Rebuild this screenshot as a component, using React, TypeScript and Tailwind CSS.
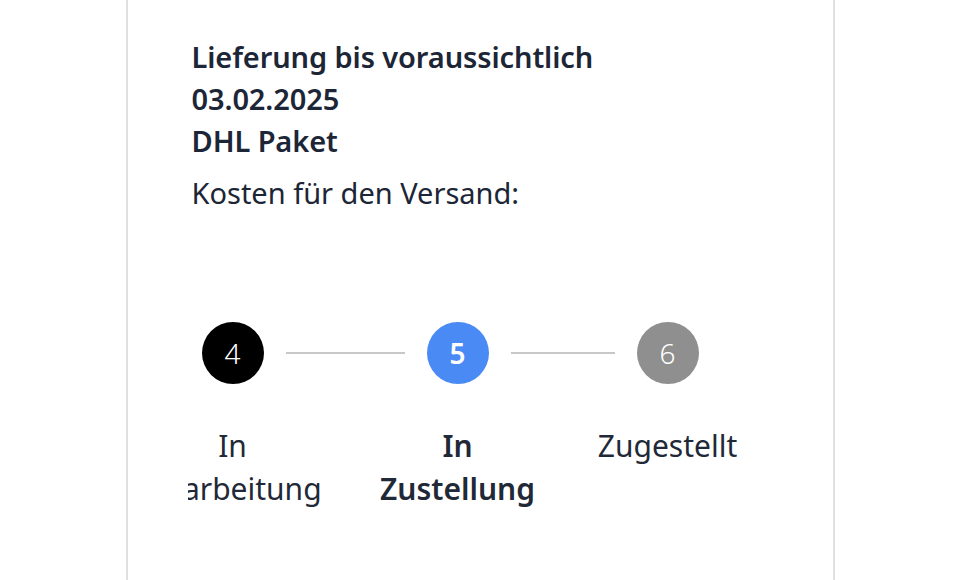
import React from "react";

const font = { fontFamily: '"Noto Sans", "Liberation Sans", sans-serif' };

function Step({ n, color, label, bold }: { n: string; color: string; label: string; bold?: boolean }) {
  return (
    <div className="flex w-[62px] shrink-0 flex-col items-center">
      <div className={`flex h-[62px] w-[62px] items-center justify-center rounded-full text-[28px] text-white ${color} ${bold ? "font-semibold" : "font-light"}`}>
        {n}
      </div>
      <div className={`mt-[40px] w-[172px] shrink-0 text-center text-[30px] leading-[43px] text-[#1f2937] ${bold ? "font-semibold" : "font-normal"}`}>
        {label}
      </div>
    </div>
  );
}

export default function App() {
  return (
    <div className="flex h-[580px] w-full justify-center bg-white" style={font}>
      <div className="h-full w-[709px] border-x-2 border-[#e0e0e0] pl-[64px] pt-[36px]">
        <div className="text-[29px] font-semibold leading-[42px] tracking-[-0.1px] text-[#1c2636]">
          <div>Lieferung bis voraussichtlich</div>
          <div>03.02.2025</div>
          <div>DHL Paket</div>
        </div>
        <div className="mt-[10px] text-[29px] font-normal leading-[42px] text-[#1c2636]">Kosten für den Versand:</div>
        <div className="mt-[108px] -ml-[4px] w-[600px] overflow-hidden">
          <div className="flex items-start pl-[14px]">
            <Step n="4" color="bg-black" label="In Bearbeitung" />
            <div className="mx-[22px] mt-[30px] h-[2px] w-[119px] shrink-0 bg-[#c8c8c8]" />
            <Step n="5" color="bg-[#4a8af4]" label="In Zustellung" bold />
            <div className="mx-[22px] mt-[30px] h-[2px] w-[104px] shrink-0 bg-[#c8c8c8]" />
            <Step n="6" color="bg-[#8f8f8f]" label="Zugestellt" />
          </div>
        </div>
      </div>
    </div>
  );
}
